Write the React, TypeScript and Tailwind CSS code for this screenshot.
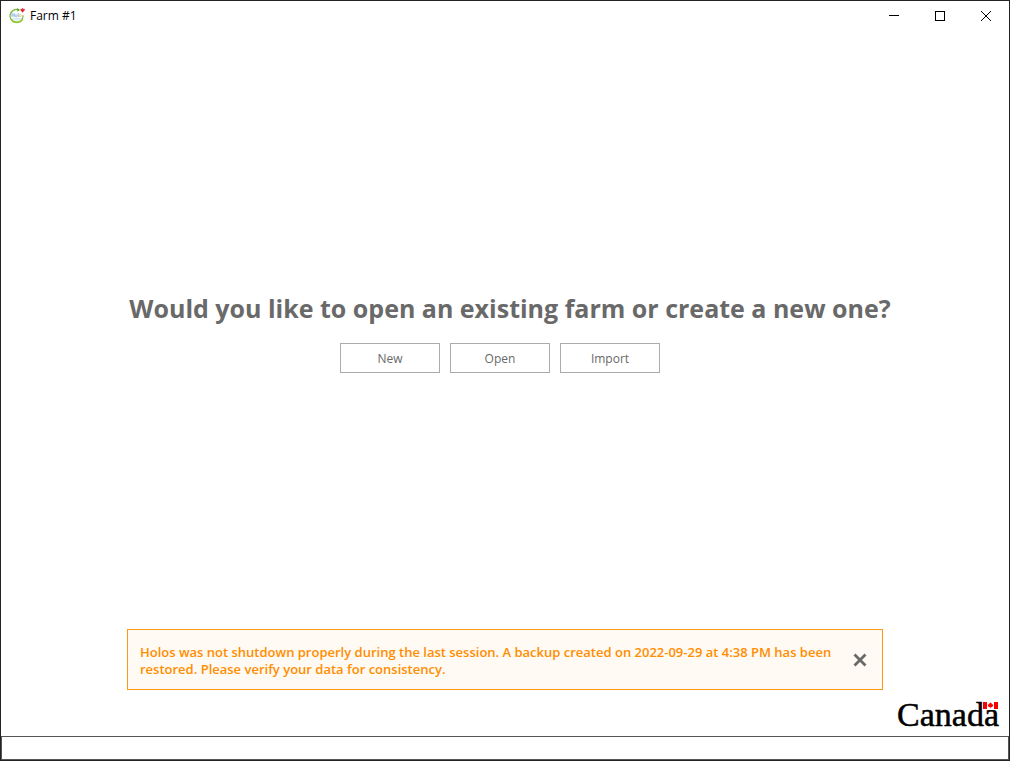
function HolosIcon() {
  return (
    <svg viewBox="0 0 16 16" className="size-4" aria-hidden="true">
      <path d="M9.6 1.8A6.5 6.5 0 1 0 14 7.2" fill="none" stroke="#78b832" strokeWidth="1.2" />
      <path d="M2.2 11A6.5 6.5 0 0 0 13.6 11" fill="none" stroke="#94c83e" strokeWidth="1.6" />
      <path d="M8.2 0l2.8 2.1-2.8 1.7z" fill="#5ba529" />
      <path d="M3 5v4M5.200 5v4M3 7h2.200M9.200 5v4" stroke="#75a9e0" strokeWidth="0.8" fill="none" />
      <circle cx="7.200" cy="7.800" r="1" fill="none" stroke="#75a9e0" strokeWidth="0.7" />
      <circle cx="11.200" cy="7.600" r="1" fill="none" stroke="#f3bd55" strokeWidth="0.8" />
      <path d="M3.500 10.500h8.500M4.500 12h6.500" stroke="#b9d8ef" strokeWidth="0.7" />
      <path d="M13.600 0l.7 1.200 1.300-.2-.4 1.900-1.200.7v.6h-.8v-.6l-1.200-.7-.4-1.900 1.300.2z" fill="#e3202b" stroke="#e3202b" strokeWidth="0.3" />
    </svg>
  );
}

function CanadaFlag() {
  return (
    <svg viewBox="0 0 16 8" className="absolute top-[3px] right-0 h-2 w-4" aria-hidden="true">
      <rect width="16" height="8" fill="#fff" />
      <rect width="4" height="7" fill="#f00" />
      <rect x="11" width="4" height="7" fill="#f00" />
      <path d="M7.500 .3l.8 1.300.7-.3-.1 1.300 1.300-.3-.3 1.200.4.400-1.900 1.300h-.6v1.100h-.6v-1.100h-.6L4.700 3.900l.4-.4-.3-1.200 1.300.3-.1-1.300.7.3z" fill="#f00" />
    </svg>
  );
}

const windowButton = "flex h-[29px] w-[46px] items-center justify-center hover:bg-neutral-200";

function TitleBar() {
  return (
    <header className="flex h-[29px] items-center pl-2 text-black">
      <HolosIcon />
      <h1 className="ml-[5px] text-xs">Farm #1</h1>
      <div className="ml-auto flex">
        <button type="button" aria-label="Minimize" className={windowButton}>
          <svg viewBox="0 0 12 12" className="size-3" shapeRendering="crispEdges">
            <path d="M1 5.500h10" stroke="#000" />
          </svg>
        </button>
        <button type="button" aria-label="Maximize" className={windowButton}>
          <svg viewBox="0 0 12 12" className="size-3" shapeRendering="crispEdges">
            <path d="M1.500 1.500h9v9h-9z" stroke="#000" fill="none" />
          </svg>
        </button>
        <button type="button" aria-label="Close" className={windowButton}>
          <svg viewBox="0 0 12 12" className="size-3">
            <path d="M1 1l10 10M11 1L1 11" stroke="#000" />
          </svg>
        </button>
      </div>
    </header>
  );
}

export default function App() {
  return (
    <div className="flex min-h-screen flex-col border border-[#232323] bg-white font-['Open_Sans','Noto_Sans',sans-serif] text-[#696969]">
      <TitleBar />
      <main className="flex grow flex-col">
        <section className="flex grow flex-col items-center justify-center pt-[5px]">
          <h2 className="ml-2.5 text-center text-[25px] leading-8 font-bold">
            Would you like to open an existing farm or create a new one?
          </h2>
          <div className="mt-[19px] mr-2.5 flex gap-2.5">
            {["New", "Open", "Import"].map((label) => (
              <button
                key={label}
                type="button"
                className="h-[30px] w-[100px] border border-[#ababab] bg-white pt-0.5 text-xs hover:bg-neutral-100"
              >
                {label}
              </button>
            ))}
          </div>
        </section>
        <div
          role="alert"
          className="mx-[126px] flex items-center justify-between border border-[#ff9914] bg-[#fffaf3] pt-3 pr-[15px] pb-[11px] pl-3"
        >
          <p className="max-w-[700px] pt-0.5 text-[13px] leading-[17px] font-semibold text-[#ff8d00]">
            Holos was not shutdown properly during the last session. A backup created on 2022-09-29 at 4:38 PM has been
            restored. Please verify your data for consistency.
          </p>
          <button type="button" aria-label="Dismiss" className="shrink-0">
            <svg viewBox="0 0 14 14" className="size-3.5">
              <path d="M1.500 1.500l11 11M12.500 1.500l-11 11" stroke="#696969" strokeWidth="2.800" />
            </svg>
          </button>
        </div>
        <div className="flex h-[46px] items-center justify-end pt-1 pr-2.5">
          <div className="relative font-['Liberation_Serif',serif] text-[34px] leading-8 text-black [-webkit-text-stroke:0.5px_black]">
            Canada
            <CanadaFlag />
          </div>
        </div>
      </main>
      <footer className="h-6 border border-[#555555] bg-white" />
    </div>
  );
}
